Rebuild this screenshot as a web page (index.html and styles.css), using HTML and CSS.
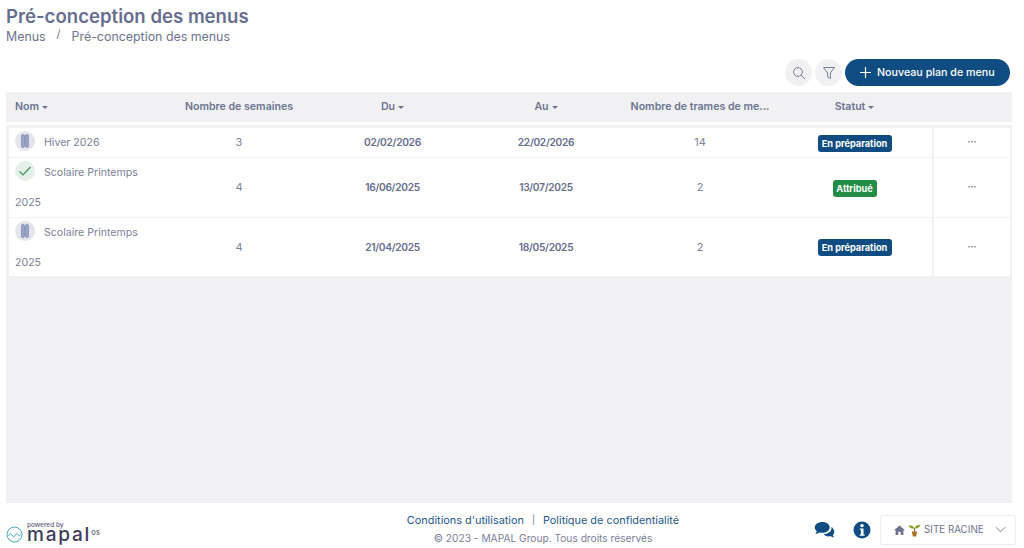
FILE: index.html
```html
<!DOCTYPE html>
<html lang="fr">
<head>
<meta charset="utf-8">
<title>Pré-conception des menus</title>
<link rel="stylesheet" href="styles.css">
</head>
<body>
<div class="page">
  <header class="head">
    <h1>Pré-conception des menus</h1>
    <nav class="crumbs"><span>Menus</span><i>/</i><span>Pré-conception des menus</span></nav>
  </header>
  <div class="toolbar">
    <button class="round"><svg width="14" height="14" viewBox="0 0 14 14"><circle cx="6" cy="6" r="4.4"/><path d="M9.2 9.2 13 13"/></svg></button>
    <button class="round"><svg width="14" height="14" viewBox="0 0 14 14"><path d="M1.5 1.5h11L8.4 7v5.5L5.6 11V7z"/></svg></button>
    <button class="primary"><svg width="13" height="13" viewBox="0 0 13 13"><path d="M6.5 1v11M1 6.5h11"/></svg>Nouveau plan de menu</button>
  </div>
  <main class="panel">
    <div class="thead">
      <div class="th left">Nom<b class="caret"></b></div>
      <div class="th">Nombre de semaines</div>
      <div class="th">Du<b class="caret"></b></div>
      <div class="th">Au<b class="caret"></b></div>
      <div class="th">Nombre de trames de me...</div>
      <div class="th">Statut<b class="caret"></b></div>
      <div class="th"></div>
    </div>
    <div class="tbody">
      <div class="row r1">
        <div class="td name"><span class="ico pause"><svg width="8" height="14" viewBox="0 0 8 14"><rect x=".5" y=".5" width="3" height="13" rx="1.400"/><rect x="4.500" y=".5" width="3" height="13" rx="1.400"/></svg></span><span class="nm">Hiver 2026</span></div>
        <div class="td">3</div>
        <div class="td date">02/02/2026</div>
        <div class="td date">22/02/2026</div>
        <div class="td">14</div>
        <div class="td"><span class="badge blue">En préparation</span></div>
        <div class="td act">···</div>
      </div>
      <div class="row r2">
        <div class="td name"><span class="ico ok"><svg width="14" height="12" viewBox="0 0 14 12"><path d="M1.5 6.5 5 10l7.5-8"/></svg></span><span class="nm">Scolaire Printemps</span><span class="yr">2025</span></div>
        <div class="td">4</div>
        <div class="td date">16/06/2025</div>
        <div class="td date">13/07/2025</div>
        <div class="td">2</div>
        <div class="td"><span class="badge green">Attribué</span></div>
        <div class="td act">···</div>
      </div>
      <div class="row r3">
        <div class="td name"><span class="ico pause"><svg width="8" height="14" viewBox="0 0 8 14"><rect x=".5" y=".5" width="3" height="13" rx="1.400"/><rect x="4.500" y=".5" width="3" height="13" rx="1.400"/></svg></span><span class="nm">Scolaire Printemps</span><span class="yr">2025</span></div>
        <div class="td">4</div>
        <div class="td date">21/04/2025</div>
        <div class="td date">18/05/2025</div>
        <div class="td">2</div>
        <div class="td"><span class="badge blue">En préparation</span></div>
        <div class="td act">···</div>
      </div>
    </div>
  </main>
  <footer class="foot">
    <div class="logo">
      <svg class="wave" width="17" height="17" viewBox="0 0 17 17"><circle cx="8.5" cy="8.5" r="7.5"/><path d="M2.500 10c1.500-2.500 2.500-3 3.500-1s2 2.500 3 .5 2-2.500 3-1 1.500 1.500 2.500 .5"/></svg>
      <div class="brand"><small>powered by</small><strong>mapal<sup>os</sup></strong></div>
    </div>
    <div class="legal">
      <div class="links"><a>Conditions d'utilisation</a><span>|</span><a>Politique de confidentialité</a></div>
      <div class="copy">© 2023 - MAPAL Group. Tous droits réservés</div>
    </div>
    <div class="tools">
      <svg class="chat" width="22" height="18" viewBox="0 0 22 18"><path class="fill" d="M8.500 1C4 1 .8 3.400.8 6.500c0 1.500.8 2.800 2 3.800-.2 1-.8 1.800-1.500 2.500 1.600 0 3-.6 4-1.400.9.300 1.800.4 2.700.4 4.500 0 7.700-2.400 7.700-5.300S13 1 8.500 1z"/><path class="fill" d="M17.300 5.700c.2.400.2.800.2 1.200 0 3.500-3.600 6-8 6.200 1 1.400 3 2.300 5 2.300.7 0 1.300-.1 1.900-.3.900.8 2.200 1.300 3.700 1.300-.7-.7-1.100-1.400-1.300-2.300 1-.8 1.500-1.900 1.500-3 0-2.200-1.200-4-3-5.400z"/></svg>
      <svg width="18" height="18" viewBox="0 0 18 18"><circle class="fill" cx="9" cy="9" r="8.500"/><circle cx="9" cy="4.600" r="1.700" fill="#fff"/><path d="M6.800 7.400h3.700v6h1.100v1.400H6.700v-1.400h1.200V8.800H6.800z" fill="#fff"/></svg>
      <div class="site">
        <svg width="11" height="10" viewBox="0 0 11 10"><path d="M5.500 .5 0 5.300h1.600V10h2.700V6.800h2.400V10h2.700V5.300H11z" fill="#6b7390"/></svg>
        <svg width="13" height="14" viewBox="0 0 12 13"><path d="M6 5C5 2.500 3 2 .5 2.500 1.500 4.500 3.500 5.500 6 5zM6 5c1-2.500 3-3.500 5.500-3C10.500 4 8.500 5.500 6 5z" fill="#7f9f1c"/><path d="M5.500 5h1v3h-1z" fill="#7a5a1e"/><path d="M3.500 8h5l-1 4.500h-3z" fill="#a8701f"/></svg>
        <span>SITE RACINE</span>
        <svg class="chev" width="11" height="7" viewBox="0 0 12 7"><path d="M1 1l5 5 5-5"/></svg>
      </div>
    </div>
  </footer>
</div>
</body>
</html>
```
FILE: styles.css
```css
* { box-sizing: border-box; }
html, body { margin: 0; height: 100%; }
body { background: #fff; font-family: Inter, "Open Sans", "Liberation Sans", sans-serif; color: #6b7390; overflow: hidden; }
.page { width: 1024px; height: 548px; display: flex; flex-direction: column; padding-left: 6px; }
.head { height: 59px; padding-top: 6px; }
h1 { margin: 0; font-size: 18.600px; line-height: 21px; font-weight: 600; color: #666e90; }
.crumbs { display: flex; align-items: center; gap: 11px; font-size: 12.400px; line-height: 16px; margin-top: 2px; color: #6b7390; }
.crumbs i { font-style: normal; font-size: 11px; position: relative; top: -3px; }
.toolbar { height: 33px; display: flex; justify-content: flex-end; gap: 3px; padding-right: 14px; align-items: flex-start; }
button { border: 0; font-family: inherit; padding: 0; }
.round { width: 27px; height: 27px; border-radius: 50%; background: #f1f1f4; display: flex; align-items: center; justify-content: center; }
.round svg { fill: none; stroke: #777e99; stroke-width: 1; }
.primary { width: 165px; height: 27px; border-radius: 14px; background: #0f4c81; color: #fff; font-size: 10.700px; font-weight: 500; display: flex; align-items: center; gap: 5px; padding-left: 14px; }
.primary svg { fill: none; stroke: #fff; stroke-width: 1.200; }
.panel { width: 1006px; height: 411px; background: #f1f1f4; }
.thead, .row { display: grid; grid-template-columns: 153px 154px 153px 154px 154px 155px 78px; }
.thead { height: 33px; align-items: center; margin-bottom: 3px; padding: 0 2px 2px 3px; border-bottom: 3px solid #fff; }
.th { text-align: center; font-size: 10.600px; font-weight: 600; color: #6b7390; white-space: nowrap; }
.th.left { text-align: left; padding-left: 6px; }
.caret { display: inline-block; width: 0; height: 0; margin-left: 3px; vertical-align: 1px; border: 3px solid transparent; border-top: 3.500px solid #6b7390; border-bottom: 0; }
.tbody { margin: 0 2px 0 3px; display: flex; flex-direction: column; gap: 1px; }
.row { background: #fff; font-size: 11px; color: #7a819b; }
.r1 { height: 29px; }
.r2 { height: 59px; }
.r3 { height: 58px; }
.td { display: flex; align-items: center; justify-content: center; padding-bottom: 1px; }
.td.act { border-left: 2px solid #f1f1f4; color: #6b7390; font-size: 9px; font-weight: 700; padding-bottom: 2px; }
.td.date { font-weight: 600; color: #666e90; font-size: 10.200px; letter-spacing: -.3px; }
.td.name { display: block; padding: 3px 0 0 6px; line-height: 20px; }
.ico { display: inline-flex; width: 20px; height: 20px; border-radius: 50%; align-items: center; justify-content: center; vertical-align: top; margin-right: 9px; }
.pause { background: #e4e5ec; }
.pause svg { fill: #9aa6c8; stroke: #6f7ba4; stroke-width: .6; }
.ok { background: #e5f1e8; }
.ok svg { fill: none; stroke: #3f8f5a; stroke-width: 1.200; }
.nm { font-size: 10.600px; color: #7a819b; position: relative; top: 1px; white-space: nowrap; }
.yr { display: block; font-size: 10.600px; margin-top: 11px; color: #7a819b; }
.badge { display: inline-block; height: 17px; margin-top: 2px; border-radius: 3px; color: #fff; font-size: 9.200px; font-weight: 700; line-height: 17px; text-align: center; white-space: nowrap; }
.blue { background: #0f4c81; width: 74px; }
.green { background: #218c44; width: 44px; }
.foot { flex: 1; display: grid; grid-template-columns: 330px 414px 1fr; align-items: center; }
.logo { display: flex; align-items: center; gap: 4px; padding-top: 12px; }
.wave { fill: none; stroke: #3aa6b5; stroke-width: 1; margin-top: 5px; }
.brand { display: flex; flex-direction: column; }
.brand small { font-size: 6.500px; line-height: 7px; color: #5d5a7a; font-weight: 500; }
.brand strong { font-size: 19px; line-height: 12px; color: #3d3a5c; font-weight: 500; letter-spacing: 1.800px; }
.brand sup { font-size: 7.500px; font-weight: 400; vertical-align: 6px; line-height: 0; margin-left: 0; letter-spacing: .3px; }
.legal { text-align: center; padding-top: 6px; }
.links { display: flex; justify-content: center; gap: 8px; color: #1f5a8a; line-height: 14px; margin-bottom: 4px; font-size: 10.900px; }
.links span { font-size: 9px; color: #6b7390; }
.copy { color: #7a819b; font-size: 10.200px; line-height: 14px; }
.tools { display: flex; align-items: center; justify-content: flex-end; padding-right: 8px; padding-top: 8px; }
.chat { margin-right: 17px; }
.fill { fill: #0f4c81; }
.site { width: 136px; height: 30px; border: 1px solid #ececf0; border-radius: 3px; display: flex; align-items: center; gap: 3px; padding-left: 13px; margin-left: 9px; font-size: 9.800px; color: #6b7390; }
.site span { margin-right: 8px; }
.chev { fill: none; stroke: #6b7390; stroke-width: 1; }
```
